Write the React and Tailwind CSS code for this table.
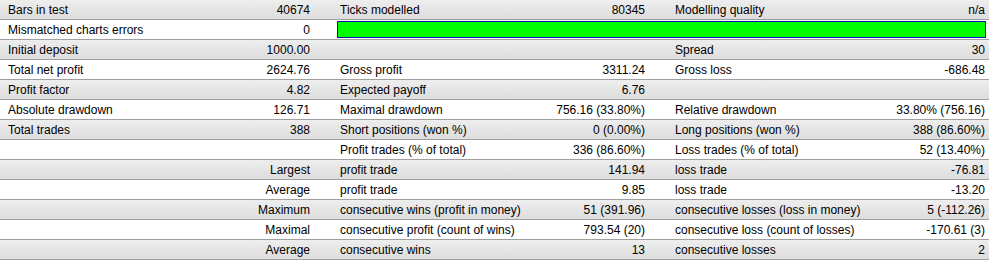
// MT4 strategy tester report: 13 stat rows in three label/value columns.
const rows = [
  [['Bars in test', '40674'], ['Ticks modelled', '80345'], ['Modelling quality', 'n/a']],
  'bar',
  [['Initial deposit', '1000.00'], ['', ''], ['Spread', '30']],
  [['Total net profit', '2624.76'], ['Gross profit', '3311.24'], ['Gross loss', '-686.48']],
  [['Profit factor', '4.82'], ['Expected payoff', '6.76'], ['', '']],
  [['Absolute drawdown', '126.71'], ['Maximal drawdown', '756.16 (33.80%)'], ['Relative drawdown', '33.80% (756.16)']],
  [['Total trades', '388'], ['Short positions (won %)', '0 (0.00%)'], ['Long positions (won %)', '388 (86.60%)']],
  [['', ''], ['Profit trades (% of total)', '336 (86.60%)'], ['Loss trades (% of total)', '52 (13.40%)']],
  [['', 'Largest'], ['profit trade', '141.94'], ['loss trade', '-76.81']],
  [['', 'Average'], ['profit trade', '9.85'], ['loss trade', '-13.20']],
  [['', 'Maximum'], ['consecutive wins (profit in money)', '51 (391.96)'], ['consecutive losses (loss in money)', '5 (-112.26)']],
  [['', 'Maximal'], ['consecutive profit (count of wins)', '793.54 (20)'], ['consecutive loss (count of losses)', '-170.61 (3)']],
  [['', 'Average'], ['consecutive wins', '13'], ['consecutive losses', '2']],
];

const cellPad = ['w-[330px] pl-2 pr-[20px]', 'w-[330px] pl-[10px] pr-[15px]', 'flex-1 pl-[15px] pr-[4px]'];

const Cell = ({ label, value, className }) => (
  <div className={`flex items-center justify-between pt-px ${className}`}>
    <span className="whitespace-nowrap">{label}</span>
    <span className="whitespace-nowrap">{value}</span>
  </div>
);

export default function App() {
  return (
    <div
      className="w-[989px] h-[262px] bg-white text-black text-[12px] leading-none overflow-hidden"
      style={{ fontFamily: '"Liberation Sans", Arial, sans-serif' }}
    >
      {rows.map((row, i) => {
        const shaded = i % 2 === 0;
        const bg = shaded ? 'bg-gradient-to-b from-[#eeeeee] to-[#dddddd]' : 'bg-white';
        if (row === 'bar') {
          return (
            <div key={i} className={`flex h-[20px] border-b border-[#a0a0a0] ${bg}`}>
              <Cell label="Mismatched charts errors" value="0" className={cellPad[0]} />
              <div className="flex-1 pl-[7px] pr-[3px] pt-px pb-[1px]">
                <div className="h-[17px] bg-[#00ff00] border border-[#1010b0]" />
              </div>
            </div>
          );
        }
        return (
          <div key={i} className={`flex h-[20px] border-b border-[#a0a0a0] ${bg}`}>
            {row.map(([label, value], j) => (
              <Cell key={j} label={label} value={value} className={cellPad[j]} />
            ))}
          </div>
        );
      })}
    </div>
  );
}
